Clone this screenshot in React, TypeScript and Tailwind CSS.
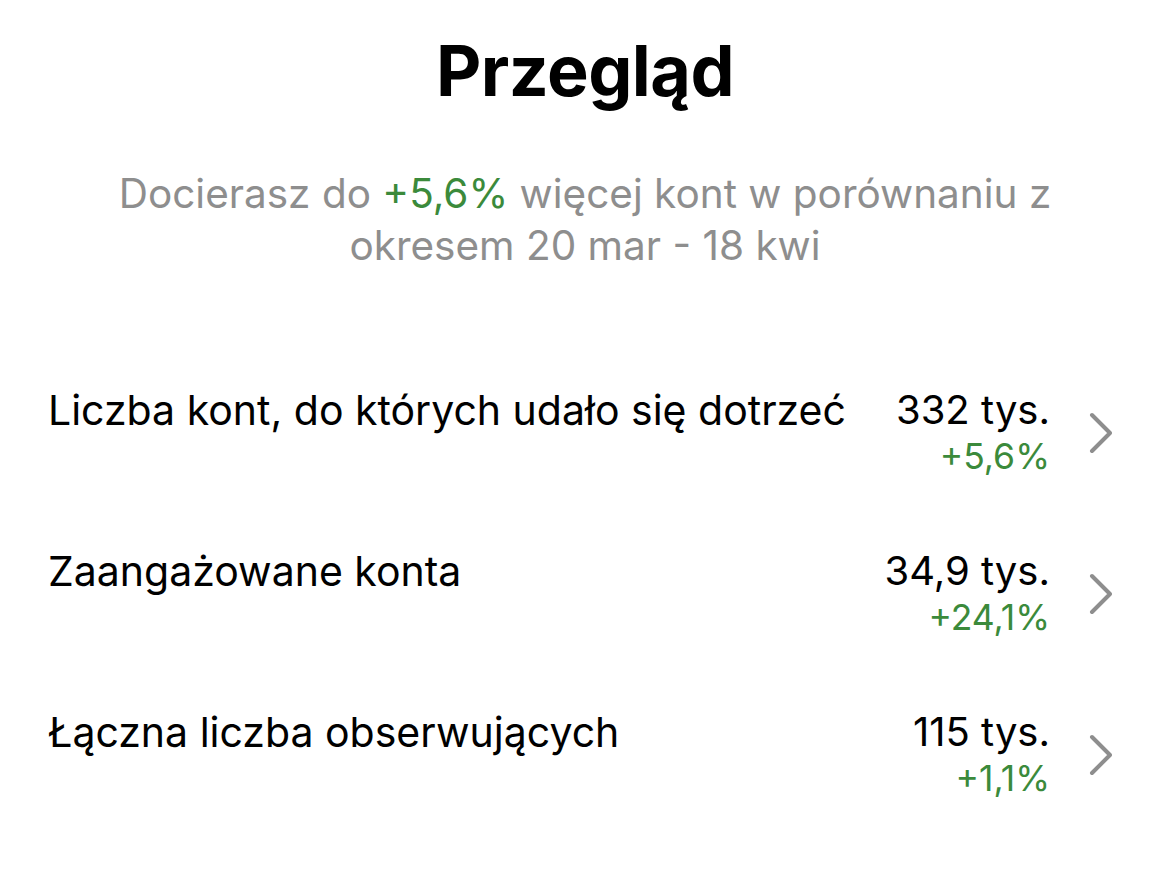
import { ReactNode } from "react";

interface StatRowProps {
  label: string;
  value: string;
  change: string;
}

function Chevron() {
  return (
    <svg width="32" height="44" viewBox="0 0 32 44" fill="none" className="shrink-0">
      <path
        d="M12 4 L30 22 L12 40"
        stroke="#8e8e8e"
        strokeWidth="4"
        strokeLinecap="round"
        strokeLinejoin="round"
      />
    </svg>
  );
}

function StatRow({ label, value, change }: StatRowProps) {
  return (
    <div className="flex items-start h-[161px]">
      <div className="flex-1 text-[41px] leading-[50px] text-black">{label}</div>
      <div className="flex flex-col items-end">
        <span className="text-[40px] leading-[50px] text-black">{value}</span>
        <span className="text-[35.5px] leading-[44px] text-[#3b8a3b]">{change}</span>
      </div>
      <div className="w-[62px] flex justify-end pt-[26px]">
        <Chevron />
      </div>
    </div>
  );
}

function Green({ children }: { children: ReactNode }) {
  return <span className="text-[#3b8a3b]">{children}</span>;
}

export default function App() {
  return (
    <div
      className="w-[1170px] h-[896px] bg-white overflow-hidden"
      style={{ fontFamily: "Inter, 'Noto Sans', sans-serif" }}
    >
      <h1 className="pt-[26px] text-center text-[70px] leading-[90px] font-bold text-black tracking-[-0.5px]">
        Przegląd
      </h1>
      <p className="mt-[52px] text-center text-[40.5px] leading-[52px] text-[#8e8e8e]">
        Docierasz do <Green>+5,6%</Green> więcej kont w porównaniu z
        <br />
        okresem 20 mar - 18 kwi
      </p>
      <div className="mt-[113px] pl-[48px] pr-[58px]">
        <StatRow label="Liczba kont, do których udało się dotrzeć" value="332 tys." change="+5,6%" />
        <StatRow label="Zaangażowane konta" value="34,9 tys." change="+24,1%" />
        <StatRow label="Łączna liczba obserwujących" value="115 tys." change="+1,1%" />
      </div>
    </div>
  );
}
